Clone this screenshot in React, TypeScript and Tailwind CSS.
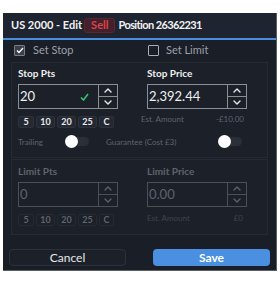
import React from "react";

const font = { fontFamily: 'Lato, "Open Sans", "Liberation Sans", sans-serif' };

function Chevron({ up, color }: { up?: boolean; color: string }) {
  return (
    <svg width="8" height="5" viewBox="0 0 8 5">
      <path
        d={up ? "M1 4 L4 1 L7 4" : "M1 1 L4 4 L7 1"}
        stroke={color}
        strokeWidth="1.4"
        fill="none"
        strokeLinecap="round"
        strokeLinejoin="round"
      />
    </svg>
  );
}

function NumInput({
  value,
  disabled,
  check,
}: {
  value: string;
  disabled?: boolean;
  check?: boolean;
}) {
  const border = disabled ? "border-[#4a4f58]" : "border-[#8a8e95]";
  const arrow = disabled ? "#5c616a" : "#e8e8e8";
  return (
    <div className={`flex h-[25px] w-[100px] border ${border}`}>
      <div
        className={`flex flex-1 items-center pl-[1px] text-[13px] ${
          disabled ? "text-[#5f646d]" : "text-[#f0f0f0]"
        }`}
      >
        <span className="flex-1">{value}</span>
        {check && (
          <svg width="9" height="8" viewBox="0 0 9 8" className="mr-[9px]">
            <path d="M1 4.5 L3.5 7 L8 1" stroke="#2ecc71" strokeWidth="1.5" fill="none" />
          </svg>
        )}
      </div>
      <div className={`flex w-[19px] flex-col border-l ${border}`}>
        <div className={`flex flex-1 items-center justify-center border-b ${border}`}>
          <Chevron up color={arrow} />
        </div>
        <div className="flex flex-1 items-center justify-center">
          <Chevron color={arrow} />
        </div>
      </div>
    </div>
  );
}

function Quick({ disabled }: { disabled?: boolean }) {
  const items = [
    ["5", "w-[16px]"],
    ["10", "w-[19px]"],
    ["20", "w-[19px]"],
    ["25", "w-[19px]"],
    ["C", "w-[15px]"],
  ];
  return (
    <div className="flex gap-[2px]">
      {items.map(([t, w]) => (
        <div
          key={t}
          className={`flex h-[12px] ${w} items-center justify-center rounded-[2px] border text-[9px] font-bold ${
            disabled
              ? "border-[#252a33] bg-[#1c2028] text-[#5f646d]"
              : "border-[#2d323c] bg-[#232832] text-[#e8e8e8]"
          }`}
        >
          {t}
        </div>
      ))}
    </div>
  );
}

function Toggle() {
  return (
    <div className="relative h-[13px] w-[24px]">
      <div className="absolute left-[4px] top-[2px] h-[9px] w-[20px] rounded-full bg-[#2a2f38]" />
      <div className="absolute left-0 top-0 h-[13px] w-[13px] rounded-full bg-white" />
    </div>
  );
}

export default function App() {
  return (
    <div className="h-[286px] w-[280px] bg-white pl-[3px] pt-[13px]" style={font}>
      <div className="flex h-[258px] w-[274px] flex-col border-b border-r border-[#5a5f68] bg-[#1a1e26]">
        {/* header */}
        <div className="flex h-[25px] items-center bg-[#1f2530] pl-[8px] text-[11px] font-bold text-[#f2f2f2]">
          <span>US 2000 - Edit</span>
          <span className="ml-[2px] flex h-[15px] items-center rounded-[3px] border border-[#5e262c] bg-[#43202a] px-[6px] text-[#d9444d]">
            Sell
          </span>
          <span className="ml-[3px] tracking-[-0.6px]">Position 26362231</span>
        </div>
        <div className="h-[2px] bg-[#4a8fdf]" />

        {/* checkbox row */}
        <div className="flex h-[20px] items-center text-[11px] text-[#9ca1a9]">
          <div className="ml-[11px] flex w-[134px] items-center">
            <div className="flex h-[11px] w-[11px] items-center justify-center rounded-[1px] border border-[#7a7e86] bg-[#3a3f48]">
              <svg width="8" height="7" viewBox="0 0 8 7">
                <path d="M1 3.5 L3 5.5 L7 1" stroke="#fff" strokeWidth="1.3" fill="none" />
              </svg>
            </div>
            <span className="ml-[8px]">Set Stop</span>
          </div>
          <div className="flex items-center">
            <div className="h-[11px] w-[11px] rounded-[1px] border border-[#a8acb3]" />
            <span className="ml-[7px]">Set Limit</span>
          </div>
        </div>

        {/* stop section */}
        <div className="mx-[8px] mt-[2px] h-[96px] border border-[#252a33] bg-[#1c2029] px-[6px]">
          <div className="flex">
            <div className="w-[129px]">
              <div className="mt-[3px] text-[10px] font-bold text-[#f0f0f0]">Stop Pts</div>
              <div className="mt-[3px]">
                <NumInput value="20" check />
              </div>
              <div className="mt-[7px]">
                <Quick />
              </div>
            </div>
            <div>
              <div className="mt-[3px] text-[10px] font-bold text-[#f0f0f0]">Stop Price</div>
              <div className="mt-[3px]">
                <NumInput value="2,392.44" />
              </div>
              <div className="ml-[-6px] mt-[4px] flex w-[103px] justify-between text-[8px] text-[#5f646d]">
                <span>Est. Amount</span>
                <span>-£10.00</span>
              </div>
            </div>
          </div>
          <div className="mt-[7px] flex items-center text-[8px] text-[#5f646d]">
            <span className="w-[47px]">Trailing</span>
            <Toggle />
            <span className="ml-[17px] w-[112px]">Guarantee (Cost £3)</span>
            <Toggle />
          </div>
        </div>

        {/* limit section */}
        <div className="mx-[8px] mt-[1px] h-[76px] border border-[#252a33] bg-[#1c2029] px-[6px]">
          <div className="flex">
            <div className="w-[129px]">
              <div className="mt-[4px] text-[10px] font-bold text-[#5f646d]">Limit Pts</div>
              <div className="mt-[3px]">
                <NumInput value="0" disabled />
              </div>
              <div className="mt-[7px]">
                <Quick disabled />
              </div>
            </div>
            <div>
              <div className="mt-[4px] text-[10px] font-bold text-[#5f646d]">Limit Price</div>
              <div className="mt-[3px]">
                <NumInput value="0.00" disabled />
              </div>
              <div className="mt-[5px] flex w-[96px] justify-between text-[8px] text-[#3f444d]">
                <span>Est. Amount</span>
                <span>£0</span>
              </div>
            </div>
          </div>
        </div>

        {/* buttons */}
        <div className="mt-[14px] flex justify-between px-[6px]">
          <div className="flex h-[17px] w-[117px] items-center justify-center rounded-[4px] border border-[#2c313b] bg-[#1c2029] text-[12px] text-[#e8e8e8]">
            Cancel
          </div>
          <div className="flex h-[17px] w-[117px] items-center justify-center rounded-[4px] bg-[#4a8fe0] text-[12px] font-bold text-white">
            Save
          </div>
        </div>
      </div>
    </div>
  );
}
